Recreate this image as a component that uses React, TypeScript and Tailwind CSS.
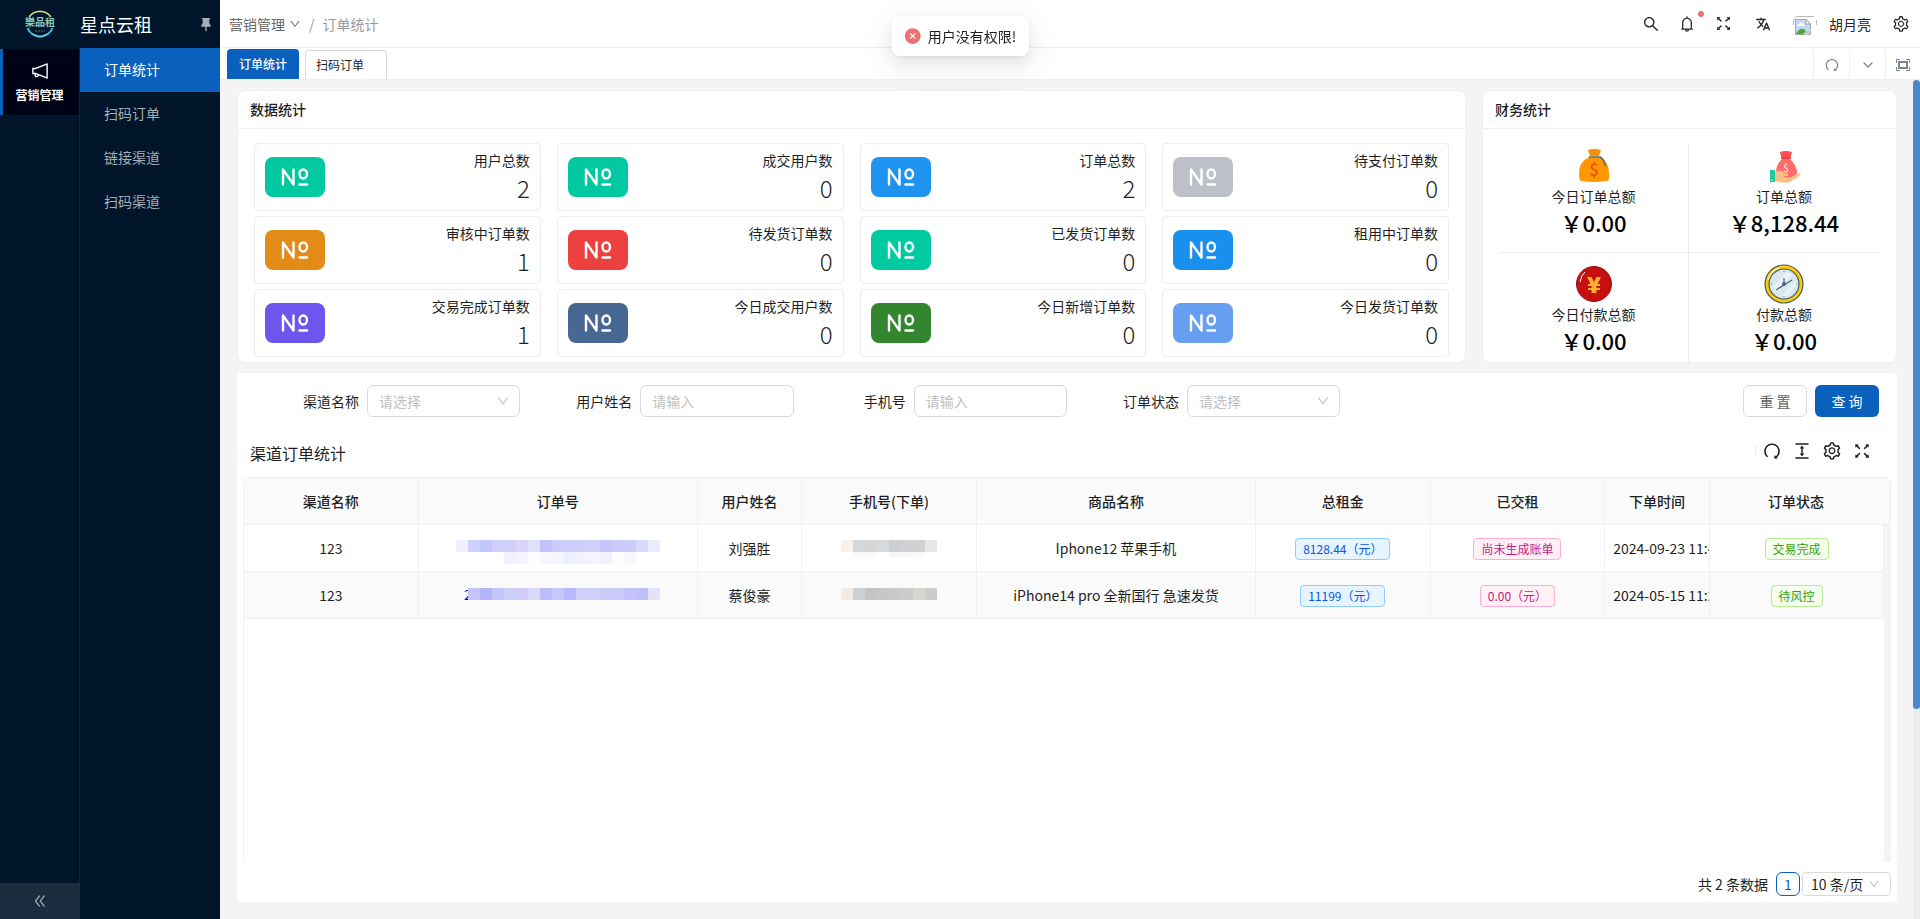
import clsx from "clsx";
import {
  AiFillCloseCircle,
  AiOutlineBell,
  AiOutlineColumnHeight,
  AiOutlineDoubleLeft,
  AiOutlineDown,
  AiOutlineFullscreen,
  AiOutlineNotification,
  AiOutlineRedo,
  AiOutlineSearch,
  AiOutlineSetting,
} from "react-icons/ai";
import { IoChevronDown, IoLanguage } from "react-icons/io5";
import { RiPushpin2Fill } from "react-icons/ri";
import { TbNumber } from "react-icons/tb";
import { VscScreenFull } from "react-icons/vsc";

const MENUS = ["订单统计", "扫码订单", "链接渠道", "扫码渠道"];

const STATS = [
  { label: "用户总数", value: 2, color: "bg-[#00c9a1]" },
  { label: "成交用户数", value: 0, color: "bg-[#00c9a1]" },
  { label: "订单总数", value: 2, color: "bg-[#1e93f0]" },
  { label: "待支付订单数", value: 0, color: "bg-[#bdc0c7]" },
  { label: "审核中订单数", value: 1, color: "bg-[#e38b17]" },
  { label: "待发货订单数", value: 0, color: "bg-[#ed4140]" },
  { label: "已发货订单数", value: 0, color: "bg-[#00cba0]" },
  { label: "租用中订单数", value: 0, color: "bg-[#1a90ee]" },
  { label: "交易完成订单数", value: 1, color: "bg-[#6e55ee]" },
  { label: "今日成交用户数", value: 0, color: "bg-[#486894]" },
  { label: "今日新增订单数", value: 0, color: "bg-[#338530]" },
  { label: "今日发货订单数", value: 0, color: "bg-[#669ff0]" },
];

const COLUMNS = [
  { title: "渠道名称", width: "w-[10.6%]" },
  { title: "订单号", width: "w-[16.95%]" },
  { title: "用户姓名", width: "w-[6.35%]" },
  { title: "手机号(下单)", width: "w-[10.6%]" },
  { title: "商品名称", width: "w-[16.95%]" },
  { title: "总租金", width: "w-[10.6%]" },
  { title: "已交租", width: "w-[10.6%]" },
  { title: "下单时间", width: "w-[6.35%]" },
  { title: "订单状态", width: "w-[10.6%]" },
];

const ORDERS = [
  {
    channel: "123",
    user: "刘强胜",
    goods: "Iphone12 苹果手机",
    total: "8128.44（元）",
    paid: "尚未生成账单",
    time: "2024-09-23 11:43:10",
    status: "交易完成",
    orderMask: {
      lead: "",
      x: 0,
      y: 0,
      blocks: [
        "#f1effe", "#cfd0fd", "#c2c7fd", "#d1d0fc", "#d0d1fd", "#dcd5fb",
        "#e0dffc", "#c3c1fb", "#cecbfc", "#ceccfc", "#cfcdfc", "#d3cffb",
        "#c8c4fb", "#cdc8fc", "#cdcbfc", "#d8d7fc", "#eaecfd",
      ],
      faint: [
        "#f1f0fe", "#f5f4fe", "#fdfdff", "#f6f6fe", "#f5f5fe", "#edf0fe",
        "#f3f3fe", "#f4f3fe", "#f0f0fe", "#fdfdff", "#f7f7fe",
      ],
    },
    phoneMask: {
      y: 0,
      blocks: [
        "#f6f1ea", "#d4d8db", "#d6d5d5", "#d8d9db", "#cccfd1", "#d0d1d3",
        "#d2d1d0", "#e7e7e8",
      ],
      faint: ["#f8faf9", "#f8f9f8", "#fefefe", "#f3f5f6", "#f6f7f7", "#fafafa"],
    },
  },
  {
    channel: "123",
    user: "蔡俊豪",
    goods: "iPhone14 pro 全新国行 急速发货",
    total: "11199（元）",
    paid: "0.00（元）",
    time: "2024-05-15 11:22:08",
    status: "待风控",
    orderMask: {
      lead: "2",
      x: 12,
      y: 1,
      blocks: [
        "#c6c3fa", "#b1b6fb", "#c4c5fb", "#cdcffb", "#d1cafa", "#dad9fa",
        "#bdbdf9", "#c8c7fb", "#b7bafa", "#d1cffa", "#d0cefa", "#c9c9fa",
        "#cac9fa", "#c2c1fa", "#c1bff9", "#e3e2f8",
      ],
      faint: [],
    },
    phoneMask: {
      y: 1,
      blocks: [
        "#f1ece6", "#cdd2d6", "#c5c4c5", "#c8c7c8", "#cacacb", "#cbcccd",
        "#d7d6d0", "#cdcccd",
      ],
      faint: [],
    },
  },
];

function Logo() {
  return (
    <svg viewBox="0 0 34 34" className="size-[34px]" aria-hidden="true">
      <path d="M6 10A13.5 13.5 0 0 1 28 10" fill="none" stroke="#c9d58a" strokeWidth="1.6" />
      <path d="M4.500 21A13.5 13.5 0 0 0 29.500 21" fill="none" stroke="#3bb4dc" strokeWidth="2" />
      <path d="M9 27A13.5 13.5 0 0 0 25 27" fill="none" stroke="#57c8e6" strokeWidth="1.5" />
      <text x="17" y="19" textAnchor="middle" fontSize="10" fontWeight="700" fill="#8cc9bd">
        樂品租
      </text>
      <path d="M12 24h10" stroke="#45757f" strokeWidth="1" strokeDasharray="2 1" />
    </svg>
  );
}

function BrokenImage() {
  return (
    <svg viewBox="0 0 24 20" className="w-6 h-5 mt-1" role="img" aria-label="头像">
      <path d="M0.500 9V5Q1 1 4 0.500H21M23.500 4V9" fill="none" stroke="#b9b9b9" />
      <path d="M2.500 3.500H13L17.500 8V13L12 18.500H2.500Z" fill="#c5d8f7" stroke="#a0a3a8" />
      <path d="M13 3.500V8H17.500Z" fill="#fff" stroke="#a0a3a8" />
      <path d="M4 10Q4 8 6 8Q7 5.500 9 7Q11 7 11 10Z" fill="#fff" />
      <path d="M3 18Q7 10 12 14L13 15L10 18Z" fill="#4ea834" />
      <path d="M17.500 15V18.500H14Z" fill="#e8e8e8" stroke="#a0a3a8" />
    </svg>
  );
}

function MoneyBag() {
  return (
    <svg viewBox="0 0 40 40" className="size-10" aria-hidden="true">
      <path d="M14 4Q20 2 27 4L25 10H16Z" fill="#f98f06" />
      <path d="M15 11H26Q35 16 35 27Q36 34 33 35Q20 37 7 35Q5 34 5 27Q5 16 15 11Z" fill="#ff9800" />
      <path d="M15 11H26Q31 14 31 20" fill="none" stroke="#5a6a6c" strokeWidth="1.500" />
      <text x="20" y="30" textAnchor="middle" fontSize="17" fontWeight="500" fill="#e65100">
        $
      </text>
    </svg>
  );
}

function MoneyHand() {
  return (
    <svg viewBox="0 0 40 40" className="size-10" aria-hidden="true">
      <path d="M16 6Q22 4 28 6L26 14H18Z" fill="#ff4f55" />
      <path d="M18 13H26Q33 20 33 27Q32 33 22 33Q12 33 12 26Q12 19 18 13Z" fill="#ff6b6b" />
      <path d="M17 12H27" stroke="#d9434c" strokeWidth="1.500" />
      <text x="22" y="26" textAnchor="middle" fontSize="10" fill="#fff">
        $
      </text>
      <path d="M11 26Q16 23 20 27Q25 27 24 30H19Q25 33 29 30L36 27Q37 29 34 31L26 36Q22 38 11 35Z" fill="#f8c087" />
      <rect x="6" y="24" width="5" height="12" fill="#20c997" />
      <circle cx="8" cy="34" r="0.700" fill="#fff" />
    </svg>
  );
}

function RedCoin() {
  return (
    <svg viewBox="0 0 40 40" className="size-10" aria-hidden="true">
      <circle cx="20" cy="20" r="17.500" fill="#c70f0f" stroke="#8e1414" />
      <path d="M6 18Q7 11 11 8" fill="none" stroke="#fff" strokeWidth="1" />
      <path
        d="M13 13H17.500L20 18L22.500 13H27L23.500 20H26V22H22.500V24H26V26H22.500V29H17.500V26H14V24H17.500V22H14V20H16.500Z"
        fill="#ffb02e"
      />
    </svg>
  );
}

function Clock() {
  return (
    <svg viewBox="0 0 40 40" className="size-10" aria-hidden="true">
      <circle cx="20" cy="20" r="19" fill="#fdc70a" stroke="#3f5f66" strokeWidth="1.200" />
      <path d="M4 16Q7 7 15 4" fill="none" stroke="#fff0a8" strokeWidth="1.500" />
      <circle cx="20" cy="20" r="15" fill="#dbe7ee" stroke="#3f5f66" strokeWidth="1.200" />
      <path d="M9 23L23 8L28 10L12 28ZM18 32L32 16L33 20L22 33Z" fill="#eaf3f7" />
      <path d="M12 26L28 16M20 21V14" stroke="#3f6a78" strokeWidth="1.200" />
      <circle cx="20" cy="20" r="2" fill="#3f6a78" />
      <path d="M20 7v1M20 32v1M7 20h1M32 20h1" stroke="#5d7d87" />
    </svg>
  );
}

type MaskProps = {
  width: string;
  lead?: string;
  x?: number;
  y: number;
  blocks: string[];
  faint: string[];
  faintX: number;
};

// masked private data, 12px mosaic blocks
function Mask({ width, lead, x = 0, y, blocks, faint, faintX }: MaskProps) {
  return (
    <svg className={clsx("mx-auto h-4 overflow-visible", width)}>
      {lead && (
        <text x="8" y="13" fontSize="14" fill="#0000ee">
          {lead}
        </text>
      )}
      {faint.map((color, i) => (
        <rect key={i} x={faintX + i * 12} y={12} width={12} height={faintX > 12 ? 12 : 5} fill={color} />
      ))}
      {blocks.map((color, i) => (
        <rect key={i} x={x + i * 12} y={y} width={12} height={12} fill={color} />
      ))}
    </svg>
  );
}

function SelectField({ id, label }: { id: string; label: string }) {
  return (
    <div className="flex items-center">
      <label htmlFor={id} className="w-[120px] pr-2 text-right">
        {label}
      </label>
      <div className="relative flex-1">
        <select
          id={id}
          className="w-full h-8 px-[11px] border border-[#d9d9d9] rounded-md bg-white text-[#bfbfbf] appearance-none"
        >
          <option>请选择</option>
        </select>
        <AiOutlineDown className="absolute right-[10px] top-[9px] size-[14px] text-[#bfbfbf] pointer-events-none" />
      </div>
    </div>
  );
}

function InputField({ id, label }: { id: string; label: string }) {
  return (
    <div className="flex items-center">
      <label htmlFor={id} className="w-[120px] pr-2 text-right">
        {label}
      </label>
      <input
        id={id}
        placeholder="请输入"
        className="flex-1 min-w-0 h-8 px-[11px] border border-[#d9d9d9] rounded-md placeholder:text-[#bfbfbf]"
      />
    </div>
  );
}

function FinanceItem({
  icon,
  label,
  value,
  className,
}: {
  icon: React.ReactNode;
  label: string;
  value: string;
  className: string;
}) {
  return (
    <div className={clsx("flex flex-col items-center border-[#ebebeb]", className)}>
      {icon}
      <span>{label}</span>
      <span className="text-[22px] leading-8 font-medium text-black">{value}</span>
    </div>
  );
}

function Tag({ color, children }: { color: string; children: React.ReactNode }) {
  return (
    <span className={clsx("inline-block px-[7px] border rounded text-xs leading-5 align-middle", color)}>
      {children}
    </span>
  );
}

function Sidebar() {
  return (
    <aside className="w-[220px] shrink-0 flex flex-col bg-[#001529] text-[#a6adb4]">
      <div className="h-12 flex items-center">
        <div className="w-20 flex justify-center">
          <Logo />
        </div>
        <h1 className="flex-1 text-lg text-white">星点云租</h1>
        <button aria-label="固定菜单" className="pr-[6px]">
          <RiPushpin2Fill className="size-4" />
        </button>
      </div>

      <div className="flex-1 flex">
        <div className="w-20 flex flex-col">
          <nav className="flex-1 border-r border-[#0f2438]">
            <a
              href="#marketing"
              className="mt-px h-[66px] flex flex-col items-center pt-3 pr-[3px] gap-1 border-l-[3px] border-[#0960bd] bg-[#000315] text-white"
            >
              <AiOutlineNotification className="size-5" />
              <span className="text-xs leading-5 font-bold">营销管理</span>
            </a>
          </nav>
          <button
            aria-label="收起"
            className="h-9 flex items-center justify-center bg-[#1b2c3e]"
          >
            <AiOutlineDoubleLeft className="size-4" />
          </button>
        </div>
        <nav className="flex-1">
          {MENUS.map((menu, i) => (
            <a
              key={menu}
              href={`#menu-${i}`}
              className={clsx(
                "h-11 flex items-center pl-6 pb-[2px]",
                i === 0 && "bg-[#0960bd] text-white"
              )}
            >
              {menu}
            </a>
          ))}
        </nav>
      </div>
    </aside>
  );
}

function Header() {
  return (
    <header className="h-12 shrink-0 flex items-center pl-[9px] pr-[10px] border-b border-[#eee] bg-white">
      <nav className="flex flex-1 items-center text-[#999]">
        <a href="#marketing" className="flex items-center gap-1 text-[#666]">
          营销管理
          <AiOutlineDown className="size-3" />
        </a>
        <span className="px-2">/</span>
        <span>订单统计</span>
      </nav>
      <div className="flex items-center text-[#262626]">
        <button aria-label="搜索" className="w-9 flex justify-center">
          <AiOutlineSearch className="size-[18px]" />
        </button>
        <button aria-label="通知" className="relative w-9 flex justify-center">
          <AiOutlineBell className="size-[18px]" />
          <span className="absolute right-px -top-1 size-[6px] rounded-full bg-[#ed6f6f]" />
        </button>
        <button aria-label="全屏" className="w-9 flex justify-center">
          <AiOutlineFullscreen className="size-[19px]" />
        </button>
        <button aria-label="语言" className="w-11 flex justify-center">
          <IoLanguage className="size-4" />
        </button>
        <button className="flex items-center gap-3 pl-2">
          <BrokenImage />
          <span>胡月亮</span>
        </button>
        <button aria-label="设置" className="pl-[21px]">
          <AiOutlineSetting className="size-[18px]" />
        </button>
      </div>
    </header>
  );
}

function TabBar() {
  return (
    <div className="h-8 shrink-0 flex items-end pl-[7px] gap-[6px] border-b border-[#eee] bg-white text-xs">
      <button className="h-[30px] px-3 rounded-t bg-[#0960bd] text-white font-medium">订单统计</button>
      <button className="h-[29px] pl-[10px] pr-[22px] border border-b-0 border-[#d9d9d9] rounded-t">
        扫码订单
      </button>
      <div className="ml-auto flex h-[29px] text-[#7d8593]">
        <button aria-label="刷新" className="w-9 flex items-center justify-center border-l border-[#eee]">
          <AiOutlineRedo className="size-4" />
        </button>
        <button aria-label="更多" className="w-9 flex items-center justify-center border-l border-[#eee]">
          <IoChevronDown className="size-[14px]" />
        </button>
        <button aria-label="内容全屏" className="w-[35px] flex items-center justify-center border-l border-[#eee]">
          <VscScreenFull className="size-4" />
        </button>
      </div>
    </div>
  );
}

function DataCard() {
  return (
    <section className="flex-1 border border-[#f0f0f0] rounded-lg bg-white">
      <h2 className="h-[38px] flex items-center px-3 pb-[2px] border-b border-[#f0f0f0] font-medium">数据统计</h2>
      <div className="grid grid-cols-4 gap-x-4 gap-y-[5px] px-4 pt-[14px] pb-[5px]">
        {STATS.map(({ label, value, color }) => (
          <div
            key={label}
            className="h-[68px] flex items-center justify-between px-[10px] border border-[#ececec] rounded"
          >
            <div
              className={clsx(
                "w-[60px] h-10 flex items-center justify-center rounded-lg text-white",
                color
              )}
            >
              <TbNumber className="size-9 stroke-[1.6]" />
            </div>
            <div className="text-right pb-[2px]">
              <p className="leading-6">{label}</p>
              <p className="text-2xl leading-8 font-light">{value}</p>
            </div>
          </div>
        ))}
      </div>
    </section>
  );
}

function FinanceCard() {
  return (
    <section className="w-[415px] shrink-0 border border-[#f0f0f0] rounded-lg bg-white">
      <h2 className="h-[38px] flex items-center px-3 pb-[2px] border-b border-[#f0f0f0] font-medium">财务统计</h2>
      <div className="grid grid-cols-2 pl-4 pr-[17px] pt-[15px] leading-5">
        <FinanceItem icon={<MoneyBag />} label="今日订单总额" value="￥0.00" className="pt-[2px] pb-[14px] border-b border-r" />
        <FinanceItem icon={<MoneyHand />} label="订单总额" value="￥8,128.44" className="pt-[2px] pb-[14px] border-b" />
        <FinanceItem icon={<RedCoin />} label="今日付款总额" value="￥0.00" className="pt-[11px] pb-[6px] border-r" />
        <FinanceItem icon={<Clock />} label="付款总额" value="￥0.00" className="pt-[11px] pb-[6px]" />
      </div>
    </section>
  );
}

function OrderTable() {
  return (
    <div className="flex-1 flex flex-col mx-[6px] border-l border-[#f0f0f0]">
      <table className="w-full table-fixed border-separate border-spacing-0 text-center">
        <colgroup>
          {COLUMNS.map(({ title, width }) => (
            <col key={title} className={width} />
          ))}
          <col />
        </colgroup>
        <thead>
          <tr className="h-12">
            {COLUMNS.map(({ title }, i) => (
              <th
                key={title}
                colSpan={i === COLUMNS.length - 1 ? 2 : 1}
                className="p-0 last:pr-2 border-t border-r border-b border-[#f0f0f0] bg-[#fafafa] font-medium first:rounded-tl-lg last:rounded-tr-lg"
              >
                {title}
              </th>
            ))}
          </tr>
        </thead>
        <tbody>
          {ORDERS.map((order) => (
            <tr
              key={order.user}
              className="h-[47px] even:bg-[#fafafa] *:p-0 *:border-r *:border-b *:border-[#f0f0f0]"
            >
              <td>{order.channel}</td>
              <td>
                <Mask width="w-[204px]" faintX={48} {...order.orderMask} />
              </td>
              <td>{order.user}</td>
              <td>
                <Mask width="w-[96px]" faintX={12} {...order.phoneMask} />
              </td>
              <td>{order.goods}</td>
              <td>
                <Tag color="bg-[#e6f4ff] border-[#91caff] text-[#0958d9]">{order.total}</Tag>
              </td>
              <td>
                <Tag color="bg-[#fff0f6] border-[#ffadd2] text-[#c41d7f]">{order.paid}</Tag>
              </td>
              <td className="pl-2! text-left whitespace-nowrap overflow-hidden">{order.time}</td>
              <td>
                <Tag color="bg-[#f6ffed] border-[#b7eb8f] text-[#389e0d]">{order.status}</Tag>
              </td>
              <td className="border-[#eff5fa]! bg-[#eff5fa]" />
            </tr>
          ))}
        </tbody>
      </table>
      <div className="flex-1 flex justify-end">
        <div className="w-[7px] bg-[#eff5fa]" />
      </div>
    </div>
  );
}

function OrderPanel() {
  return (
    <section className="flex-1 flex flex-col rounded-sm bg-white">
      <form className="grid grid-cols-6 px-[10px] pt-3">
        <SelectField id="channel" label="渠道名称" />
        <InputField id="username" label="用户姓名" />
        <InputField id="phone" label="手机号" />
        <SelectField id="status" label="订单状态" />
        <div className="col-span-2 flex justify-end gap-2 pr-2">
          <button type="button" className="w-16 h-8 border border-[#d9d9d9] rounded-md text-[#606266]">
            重 置
          </button>
          <button type="button" className="w-16 h-8 rounded-md bg-[#0960bd] text-white">
            查 询
          </button>
        </div>
      </form>

      <div className="h-[60px] flex items-center justify-between pl-[13px] pt-3 pr-[25px]">
        <h2 className="text-base">渠道订单统计</h2>
        <div className="flex items-center gap-[10px] -mt-1 text-[#1f1f1f]">
          <span className="w-px h-3 -mr-1 bg-[#eee]" />
          <button aria-label="刷新">
            <AiOutlineRedo className="size-5" />
          </button>
          <button aria-label="密度">
            <AiOutlineColumnHeight className="size-5" />
          </button>
          <button aria-label="列设置">
            <AiOutlineSetting className="size-5" />
          </button>
          <button aria-label="全屏">
            <AiOutlineFullscreen className="size-5" />
          </button>
        </div>
      </div>

      <OrderTable />

      <div className="h-10 flex items-center justify-end pr-[6px] pt-1">
        <span>共 2 条数据</span>
        <button className="size-6 ml-2 mr-[2px] border border-[#0960bd] rounded-md text-[#0960bd] leading-none">
          1
        </button>
        <div className="relative">
          <select
            aria-label="每页条数"
            className="w-[89px] h-6 pl-2 border border-[#d9d9d9] rounded bg-white appearance-none"
          >
            <option>10 条/页</option>
          </select>
          <AiOutlineDown className="absolute right-[11px] top-[6px] size-3 text-[#bfbfbf] pointer-events-none" />
        </div>
      </div>
    </section>
  );
}

function App() {
  return (
    <div className="h-screen flex bg-[#f4f4f4] font-['Noto_Sans_CJK_SC',sans-serif] text-sm text-[#1f1f1f]">
      <Sidebar />
      <div className="flex-1 min-w-0 flex flex-col">
        <Header />
        <TabBar />
        <div className="flex-1 flex">
          <main className="flex-1 min-w-0 flex flex-col gap-[10px] pl-[17px] pr-4 pt-[10px] pb-[17px]">
            <div className="flex gap-4">
              <DataCard />
              <FinanceCard />
            </div>
            <OrderPanel />
          </main>
          <div className="w-[7px] bg-[#e8edf2]">
            <div className="h-3/4 rounded-sm bg-[#4a89cc]" />
          </div>
        </div>
      </div>

      <div
        role="alert"
        className="fixed top-4 left-1/2 -translate-x-1/2 h-10 flex items-center gap-[6px] px-3 rounded-lg bg-white shadow-[0_6px_16px_rgba(0,0,0,0.08),0_3px_6px_-4px_rgba(0,0,0,0.12),0_9px_28px_8px_rgba(0,0,0,0.05)]"
      >
        <AiFillCloseCircle className="size-[18px] text-[#ef7072]" />
        用户没有权限!
      </div>
    </div>
  );
}

export default App;
